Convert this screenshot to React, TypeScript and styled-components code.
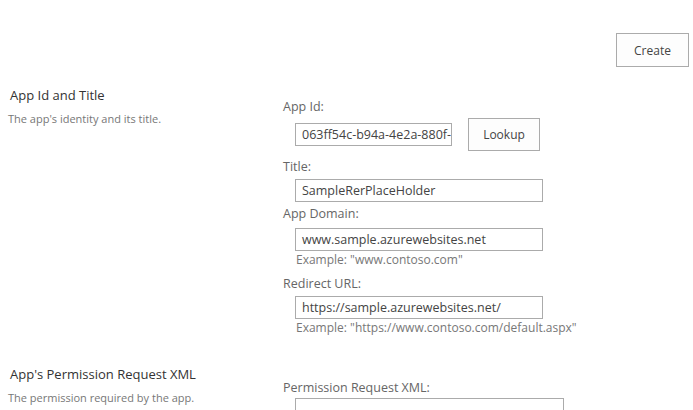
import React from "react";
import styled, { createGlobalStyle } from "styled-components";

const Global = createGlobalStyle`
  html, body { margin: 0; padding: 0; background: #ffffff; }
  body { font-family: "Open Sans", "Noto Sans", sans-serif; color: #444; }
  * { box-sizing: border-box; }
`;

const Page = styled.div`
  width: 693px;
  height: 410px;
  overflow: hidden;
  background: #fff;
`;

const Toolbar = styled.div`
  display: flex;
  justify-content: flex-end;
  padding: 33px 4px 0 0;
  height: 84px;
`;

const Button = styled.button<{ $w: number; $h: number }>`
  width: ${(p) => p.$w}px;
  height: ${(p) => p.$h}px;
  border: 1px solid #ababab;
  background: #fdfdfd;
  color: #444;
  font-family: "Open Sans", sans-serif;
  font-size: 12px;
  padding: 0;
  flex: none;
`;

const Section = styled.div<{ $mt: number }>`
  display: grid;
  grid-template-columns: 283px 1fr;
  margin-top: ${(p) => p.$mt}px;
`;

const Info = styled.div<{ $pt: number }>`
  padding-top: ${(p) => p.$pt}px;
  display: flex;
  flex-direction: column;
  gap: 7px;
`;

const InfoTitle = styled.div`
  font-size: 13px;
  line-height: 18px;
  color: #333;
  padding-left: 10px;
`;

const InfoDesc = styled.div`
  font-size: 11px;
  line-height: 16px;
  color: #777;
  padding-left: 8px;
`;

const Fields = styled.div<{ $pt: number }>`
  padding-top: ${(p) => p.$pt}px;
  display: flex;
  flex-direction: column;
`;

const Label = styled.div<{ $mt?: number }>`
  font-size: 12.5px;
  line-height: 18px;
  color: #666;
  margin-top: ${(p) => p.$mt ?? 0}px;
`;

const Row = styled.div<{ $mt: number }>`
  display: flex;
  align-items: center;
  gap: 16px;
  padding-left: 12px;
  margin-top: ${(p) => p.$mt}px;
`;

const Input = styled.div<{ $w: number; $h?: number }>`
  width: ${(p) => p.$w}px;
  height: ${(p) => p.$h ?? 23}px;
  border: 1px solid #ababab;
  background: #fff;
  font-size: 12.5px;
  line-height: 21px;
  color: #444;
  padding-left: 6px;
  white-space: nowrap;
  overflow: hidden;
  flex: none;
`;

const Hint = styled.div`
  font-size: 12px;
  line-height: 18px;
  color: #777;
  padding-left: 13px;
`;

export default function App() {
  return (
    <Page>
      <Global />
      <Toolbar>
        <Button $w={73} $h={34}>Create</Button>
      </Toolbar>
      <Section $mt={0}>
        <Info $pt={2}>
          <InfoTitle>App Id and Title</InfoTitle>
          <InfoDesc>The app's identity and its title.</InfoDesc>
        </Info>
        <Fields $pt={14}>
          <Label>App Id:</Label>
          <Row $mt={2}>
            <Input $w={157}>063ff54c-b94a-4e2a-880f-</Input>
            <Button $w={72} $h={33}>Lookup</Button>
          </Row>
          <Label $mt={7}>Title:</Label>
          <Row $mt={3}>
            <Input $w={248}>SampleRerPlaceHolder</Input>
          </Row>
          <Label $mt={3}>App Domain:</Label>
          <Row $mt={5}>
            <Input $w={248}>www.sample.azurewebsites.net</Input>
          </Row>
          <Hint>Example: "www.contoso.com"</Hint>
          <Label $mt={6}>Redirect URL:</Label>
          <Row $mt={3}>
            <Input $w={248}>https://sample.azurewebsites.net/</Input>
          </Row>
          <Hint>Example: "https://www.contoso.com/default.aspx"</Hint>
        </Fields>
      </Section>
      <Section $mt={28}>
        <Info $pt={0}>
          <InfoTitle>App's Permission Request XML</InfoTitle>
          <InfoDesc>The permission required by the app.</InfoDesc>
        </Info>
        <Fields $pt={14}>
          <Label>Permission Request XML:</Label>
          <Row $mt={1}>
            <Input $w={269} $h={60} />
          </Row>
        </Fields>
      </Section>
    </Page>
  );
}
